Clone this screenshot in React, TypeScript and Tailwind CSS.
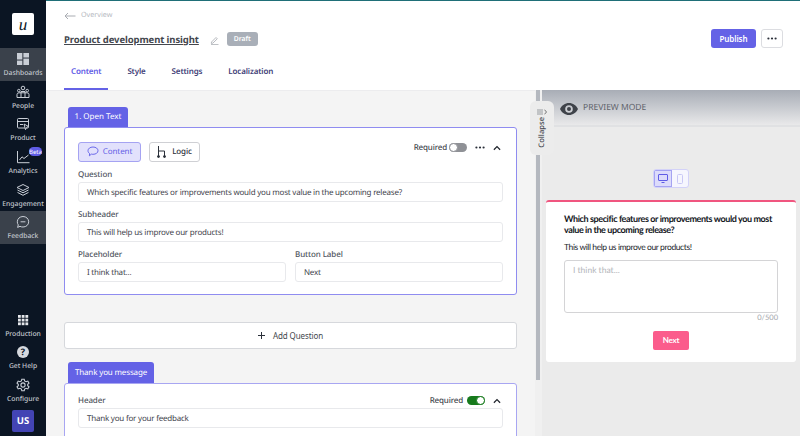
import React from "react";

const NavIcon = ({ name }: { name: string }) => {
  const p = { width: 14, height: 14, viewBox: "0 0 14 14", fill: "none", stroke: "#c9ced6", strokeWidth: 1 } as const;
  switch (name) {
    case "Dashboards":
      return (
        <svg {...p} stroke="none" fill="#c9ced6">
          <rect x="1" y="1" width="5.3" height="6.5" />
          <rect x="7.4" y="1" width="5.6" height="4.5" />
          <rect x="1" y="8.6" width="5.3" height="4.4" />
          <rect x="7.4" y="6.6" width="5.6" height="6.4" />
        </svg>
      );
    case "People":
      return (
        <svg {...p}>
          <circle cx="7" cy="3" r="1.8" />
          <circle cx="2.8" cy="5.6" r="1.3" />
          <circle cx="11.2" cy="5.6" r="1.3" />
          <path d="M1 12.5V9.5Q1 7.8 3 7.8H11Q13 7.8 13 9.5V12.5ZM5 12.5V6.5H9V12.5" />
        </svg>
      );
    case "Product":
      return (
        <svg {...p}>
          <rect x="1.5" y="1.5" width="11" height="9.5" rx="1" />
          <path d="M1.5 4.5H12.5M4 7.5H7" />
          <path d="M8 7L12.5 9.5L10.4 10.4L9.5 12.7Z" fill="#0b1523" />
        </svg>
      );
    case "Analytics":
      return (
        <svg {...p}>
          <path d="M1.5 1V12.7H13.5" />
          <path d="M3.5 10L6 6.8L8 8.5L12.5 5" />
        </svg>
      );
    case "Engagement":
      return (
        <svg {...p}>
          <path d="M7 1.5L13 4.5L7 7.5L1 4.5Z" />
          <path d="M1.5 7L7 9.8L12.5 7M1.5 9.4L7 12.3L12.5 9.4" />
        </svg>
      );
    case "Feedback":
      return (
        <svg {...p}>
          <path d="M7 1.5C10.2 1.5 12.7 3.8 12.7 6.8C12.7 9.8 10.2 12 7 12C5.8 12 4.9 11.8 4 11.3L1.6 12.4L2.3 9.9C1.6 9 1.3 8 1.3 6.8C1.3 3.8 3.8 1.5 7 1.5Z" />
          <path d="M4.6 6.8H9.4" />
        </svg>
      );
    case "Production":
      return (
        <svg {...p} stroke="none" fill="#e6e8ec">
          {[2, 5.7, 9.4].flatMap((y) =>
            [2, 5.7, 9.4].map((x) => <rect key={`${x}-${y}`} x={x} y={y} width="2.8" height="2.8" />)
          )}
        </svg>
      );
    case "Get Help":
      return (
        <svg {...p} stroke="none">
          <circle cx="7" cy="7" r="6" fill="#d5d8dd" />
          <text x="7" y="10.2" textAnchor="middle" fontSize="9" fontWeight="700" fontFamily="Open Sans, sans-serif" fill="#0b1523">?</text>
        </svg>
      );
    default:
      return (
        <svg {...p} strokeWidth="1.1">
          <path d="M5.8 1.2H8.2L8.6 2.9L10.1 3.7L11.8 3.1L13 5.2L11.7 6.3V7.7L13 8.8L11.8 10.9L10.1 10.3L8.6 11.1L8.2 12.8H5.8L5.4 11.1L3.9 10.3L2.2 10.9L1 8.8L2.3 7.7V6.3L1 5.2L2.2 3.1L3.9 3.7L5.4 2.9Z" />
          <circle cx="7" cy="7" r="2.1" />
        </svg>
      );
  }
};

const NavItem = ({ label, active, beta }: { label: string; active?: boolean; beta?: boolean }) => (
  <div className={`relative flex h-[32.7px] flex-col items-center justify-center pt-[1px] ${active ? "bg-[#3a414b]" : ""}`}>
    <NavIcon name={label} />
    <span className="mt-[2px] text-[6.8px] leading-[10px] font-medium text-[#c3c8cf]">{label}</span>
    {beta && (
      <span className="absolute top-[1px] left-[29px] flex h-[9px] w-[13px] items-center justify-center rounded-full bg-[#5f5ce6] text-[6px] leading-none text-white">
        Beta
      </span>
    )}
  </div>
);

const Field = ({ label, value, className = "" }: { label: string; value: string; className?: string }) => (
  <div className={`flex flex-col ${className}`}>
    <label className="text-[8px] leading-[13px] font-medium tracking-[-0.1px] text-[#50555e]">{label}</label>
    <div className="mt-[1px] flex h-[20px] items-center rounded-[3px] border border-[#e8e9ec] bg-white px-[8px] pt-[2px] text-[8px] tracking-[-0.22px] text-[#3f444c]">
      {value}
    </div>
  </div>
);

const Dots = () => (
  <svg width="10" height="3" viewBox="0 0 10 3" fill="#2b303a">
    <circle cx="1.4" cy="1.5" r="1.1" />
    <circle cx="5" cy="1.5" r="1.1" />
    <circle cx="8.6" cy="1.5" r="1.1" />
  </svg>
);

const Chevron = () => (
  <svg width="8" height="6" viewBox="0 0 9 6" fill="none" stroke="#20242c" strokeWidth="1.4">
    <path d="M1 5L4.5 1.5L8 5" />
  </svg>
);

const Tab = ({ label, active }: { label: string; active?: boolean }) => (
  <div
    className={`flex h-[35px] items-center justify-center border-b-2 px-[7px] text-[8px] font-semibold tracking-[-0.15px] ${
      active ? "border-[#6462e6] text-[#5f5ce6]" : "border-transparent text-[#3f4178]"
    }`}
  >
    {label}
  </div>
);

export default function App() {
  return (
    <div className="relative flex h-[436px] w-[800px] overflow-hidden bg-white font-['Noto_Sans','Open_Sans',sans-serif] [text-rendering:geometricPrecision]">
      <aside className="flex h-full w-[46px] shrink-0 flex-col bg-[#0b1523]">
        <div className="mt-[13px] mb-[13px] ml-[12px] flex h-[22px] w-[22px] items-center justify-center rounded-[2px] bg-white font-['Liberation_Serif',serif] text-[17px] leading-none text-[#0b1523] italic">
          u
        </div>
        <NavItem label="Dashboards" active />
        <NavItem label="People" />
        <NavItem label="Product" />
        <NavItem label="Analytics" beta />
        <NavItem label="Engagement" />
        <NavItem label="Feedback" active />
        <div className="mt-auto" />
        <NavItem label="Production" />
        <NavItem label="Get Help" />
        <NavItem label="Configure" />
        <div className="mt-[3px] mb-[4px] ml-[12px] flex h-[22px] w-[22px] items-center justify-center rounded-[2px] bg-[#4344b4] text-[9.5px] font-bold text-white">
          US
        </div>
      </aside>

      <div className="flex h-full min-w-0 flex-1 flex-col">
        <header className="h-[90px] shrink-0 border-t border-[#1f6f78] bg-white pl-[18px] pr-[17px]">
          <div className="flex h-[29px] items-center gap-[5px] text-[7.2px] text-[#b6b9bf]">
            <svg width="12" height="8" viewBox="0 0 12 8" fill="none" stroke="#a9acb2" strokeWidth="1">
              <path d="M11.5 4H1M4 1L1 4L4 7" />
            </svg>
            Overview
          </div>
          <div className="flex h-[20px] items-center justify-between">
            <div className="flex items-center">
              <span className="text-[9.5px] font-bold tracking-[-0.1px] text-[#44474e] underline">Product development insight</span>
              <svg className="ml-[11px]" width="9" height="9" viewBox="0 0 9 9" fill="none" stroke="#a5a8ae" strokeWidth="0.8">
                <path d="M1.5 6L6 1.5L7.3 2.8L2.8 7.2L1.3 7.4ZM1 8.6H8.5" />
              </svg>
              <span className="mb-[2px] ml-[8px] flex h-[14px] w-[31px] items-center justify-center rounded-[3px] bg-[#a9afb8] text-[6.8px] font-semibold text-white">
                Draft
              </span>
            </div>
            <div className="mb-[3px] flex items-center gap-[5px]">
              <button className="flex h-[19px] w-[45px] items-center justify-center rounded-[3px] bg-[#6462e6] text-[8px] font-semibold tracking-[-0.1px] text-white">
                Publish
              </button>
              <button className="flex h-[19px] w-[22px] items-center justify-center rounded-[3px] border border-[#dcdde1] bg-white">
                <Dots />
              </button>
            </div>
          </div>
          <nav className="mt-[5px] flex gap-[12px]">
            <Tab label="Content" active />
            <Tab label="Style" />
            <Tab label="Settings" />
            <Tab label="Localization" />
          </nav>
        </header>

        <div className="flex min-h-0 flex-1">
          <main className="relative h-full w-[489px] shrink-0 overflow-hidden border-t border-[#ececee] bg-[#f4f4f4] pl-[18px]">
            <div className="mt-[16px] ml-[4px] flex h-[20px] w-[60px] items-center justify-center rounded-t-[3px] bg-[#6462e6] text-[8px] text-white">
              1. Open Text
            </div>
            <section className="h-[168px] w-[453px] rounded-[3px] border border-[#8f8cf0] bg-white px-[13px] pt-[13px]">
              <div className="flex h-[21px] items-center">
                <div className="flex h-[20px] w-[63px] items-center justify-center gap-[4px] rounded-[3px] border border-[#a5a3f2] bg-[#e2e1fc] text-[8px] tracking-[-0.1px] text-[#6462e6]">
                  <svg width="12" height="11" viewBox="0 0 12 11" fill="none" stroke="#5f5ce6" strokeWidth="0.9">
                    <path d="M6 1C8.9 1 11 2.6 11 4.7C11 6.8 8.9 8.3 6 8.3C5.4 8.3 4.9 8.3 4.4 8.1L2.4 9.8L2.6 7.5C1.6 6.9 1 5.9 1 4.7C1 2.6 3.1 1 6 1Z" />
                  </svg>
                  Content
                </div>
                <div className="ml-[8px] flex h-[20px] w-[51px] items-center justify-center gap-[6px] rounded-[3px] border border-[#cfd0d4] bg-white text-[8px] font-medium tracking-[-0.1px] text-[#2b303a]">
                  <svg width="9" height="13" viewBox="0 0 9 13" fill="none" stroke="#2b303a" strokeWidth="1">
                    <path d="M1.5 1V12M1.5 6H7.5V12" />
                    <circle cx="1.5" cy="11.5" r="1" fill="#2b303a" />
                    <circle cx="7.5" cy="11.5" r="1" fill="#2b303a" />
                  </svg>
                  Logic
                </div>
                <div className="mb-[8px] ml-auto flex items-center">
                  <span className="text-[8px] font-medium tracking-[-0.15px] text-[#44474e]">Required</span>
                  <span className="ml-[2px] flex h-[9px] w-[18px] items-center rounded-full bg-[#8f9196]">
                    <span className="h-[9px] w-[9px] rounded-full border border-[#8f9196] bg-white" />
                  </span>
                  <span className="mr-[8px] ml-[8px] flex"><Dots /></span>
                  <span className="mr-[2px] flex"><Chevron /></span>
                </div>
              </div>
              <Field label="Question" value="Which specific features or improvements would you most value in the upcoming release?" className="mt-[6px]" />
              <Field label="Subheader" value="This will help us improve our products!" className="mt-[6px]" />
              <div className="mt-[6px] grid grid-cols-2 gap-[9px]">
                <Field label="Placeholder" value="I think that..." />
                <Field label="Button Label" value="Next" />
              </div>
            </section>
            <button className="mt-[27px] flex h-[27px] w-[453px] items-center justify-center gap-[8px] rounded-[3px] border border-[#d6d8dc] bg-white text-[8px] tracking-[-0.1px] text-[#44474e]">
              <svg width="7" height="7" viewBox="0 0 7 7" stroke="#2b303a" strokeWidth="1">
                <path d="M3.5 0V7M0 3.5H7" />
              </svg>
              Add Question
            </button>
            <div className="mt-[13px] ml-[4px] flex h-[21px] w-[86px] items-center justify-center rounded-t-[3px] bg-[#6462e6] text-[8px] tracking-[-0.15px] text-white">
              Thank you message
            </div>
            <section className="h-[80px] w-[453px] rounded-[3px] border border-[#a8a6f2] bg-white px-[13px] pt-[10px]">
              <div className="relative">
                <Field label="Header" value="Thank you for your feedback" />
                <div className="absolute top-0 right-[2px] flex items-center">
                  <span className="text-[8px] leading-[13px] font-medium tracking-[-0.15px] text-[#44474e]">Required</span>
                  <span className="mr-[8px] ml-[4px] flex h-[9px] w-[18px] items-center justify-end rounded-full bg-[#167a1c]">
                    <span className="h-[9px] w-[9px] rounded-full border border-[#167a1c] bg-white" />
                  </span>
                  <Chevron />
                </div>
              </div>
            </section>
          </main>

          <div className="flex h-full w-[7px] shrink-0 justify-start bg-[#f0f0f0] pl-[1px]">
            <div className="h-[290px] w-[4px] bg-[#b4b8bf]" />
          </div>

          <aside className="relative h-full min-w-0 flex-1 bg-[#ebebeb]">
            <div className="flex h-[37px] items-center gap-[5px] border-b-2 border-[#e0e1e3] bg-gradient-to-b from-[#a8adb6] to-[#e9e9ea] pt-[2px] pl-[18px] text-[8.5px] text-[#5f636b]">
              <svg width="18" height="12" viewBox="0 0 18 12" fill="#3f434a">
                <path fillRule="evenodd" d="M9 0C13 0 16.3 2.4 18 6C16.3 9.6 13 12 9 12C5 12 1.7 9.6 0 6C1.7 2.4 5 0 9 0ZM9 2.2A3.8 3.8 0 1 0 9 9.8A3.8 3.8 0 1 0 9 2.2Z" />
                <circle cx="9" cy="6" r="2" />
              </svg>
              PREVIEW MODE
            </div>
            <div className="mt-[42px] flex justify-center">
              <div className="flex h-[19px] w-[36px] overflow-hidden rounded-[3px] border border-[#d3d2f8] bg-[#f6f6fe]">
                <div className="flex w-[18px] items-center justify-center border border-[#a5a3f2] bg-[#dcdbfb]">
                  <svg width="10" height="9" viewBox="0 0 10 9" fill="none" stroke="#5f5ce6" strokeWidth="1">
                    <rect x="0.5" y="0.5" width="9" height="6" rx="0.5" />
                    <path d="M3.5 8.5H6.5" />
                  </svg>
                </div>
                <div className="flex flex-1 items-center justify-center">
                  <svg width="6" height="10" viewBox="0 0 6 10" fill="none" stroke="#c9c8f5" strokeWidth="1">
                    <rect x="0.5" y="0.5" width="5" height="9" rx="1" />
                  </svg>
                </div>
              </div>
            </div>
            <div className="mt-[12px] ml-[4px] h-[162px] w-[250px] rounded-[3px] border-t-2 border-[#f0557f] bg-white px-[18px] pt-[11px] font-['Lato',sans-serif]">
              <p className="text-[9px] leading-[11px] font-bold tracking-[-0.4px] text-[#12151b]">
                Which specific features or improvements would you most value in the upcoming release?
              </p>
              <p className="mt-[5.5px] text-[8.5px] leading-[12px] tracking-[-0.4px] text-[#22252b]">This will help us improve our products!</p>
              <div className="mt-[7px] h-[53px] w-[214px] rounded-[3px] border border-[#d4d4d6] px-[8px] py-[3px] text-[8.5px] leading-[12px] text-[#b3b5ba]">
                I think that...
              </div>
              <div className="w-[214px] text-right text-[7.5px] leading-[10px] text-[#a6a8ad]">0/500</div>
              <div className="mt-[8px] flex w-[214px] justify-center">
                <button className="flex h-[19px] w-[36px] items-center justify-center rounded-[2px] bg-[#fb5c8c] text-[8px] font-bold tracking-[-0.2px] text-white">
                  Next
                </button>
              </div>
            </div>
          </aside>
        </div>
      </div>

      <div className="absolute top-[101px] left-[530px] flex h-[54px] w-[24px] flex-col items-center rounded-[6px] bg-[#ececec] pt-[8px]">
        <div className="flex items-center gap-[1px]">
          <svg width="6" height="6" viewBox="0 0 6 6" stroke="#777b83" strokeWidth="0.7">
            <path d="M0 1H6M0 3H6M0 5H6" />
          </svg>
          <svg width="3" height="6" viewBox="0 0 3 6" fill="none" stroke="#555" strokeWidth="0.8">
            <path d="M0.5 0.7L2.5 3L0.5 5.3" />
          </svg>
        </div>
        <span className="mt-[2px] text-[7.6px] leading-[10px] font-medium text-[#44474e] [writing-mode:vertical-rl] rotate-180">
          Collapse
        </span>
      </div>
    </div>
  );
}
